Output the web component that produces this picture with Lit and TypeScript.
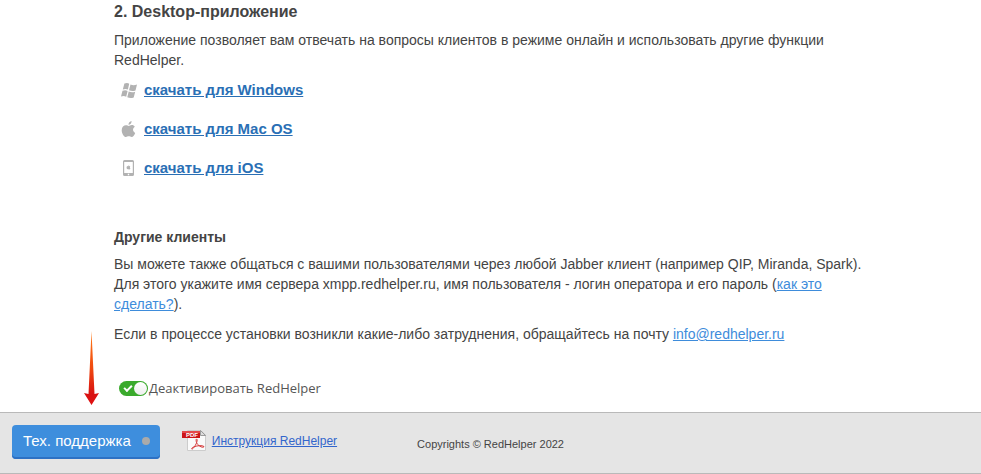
import { LitElement, html, css, svg } from "lit";
import { customElement, state } from "lit/decorators.js";

const windowsIcon = svg`
  <path d="M3.400 1.600C5.300.6 7 .8 8.200 1.700L6.900 7.600C5.300 6.700 3.600 6.700 1.800 7.500Z" />
  <path d="M9.500 2.400C11.400 3.400 13.600 3.400 16 2.500L14.500 8.500C12.300 9.300 10 9.200 8 8.200Z" />
  <path d="M1.500 8.700C3.400 7.900 5.200 8 6.600 8.900L5.200 14.700C3.700 13.800 2 13.700 0 14.500Z" />
  <path d="M7.700 9.500C9.700 10.400 11.800 10.500 14.200 9.700L12.700 15.400C10.400 16.200 8.300 16.100 6.300 15.200Z" />`;

const appleIcon = svg`
  <path d="M10.600 0C10.700 2.100 9.200 3.700 7.500 3.800 7.300 2 8.900.2 10.600 0Z" />
  <path d="M7.700 4.900C8.500 4.900 9.300 4.100 10.800 4.100 12.100 4.100 13.200 4.800 13.800 5.800 11.300 7.300 11.600 10.700 14.200 11.900 13.500 13.800 12.100 16 10.700 16 9.500 16 9.100 15.300 7.800 15.300 6.500 15.300 6 16 4.900 16 3 16 .7 12.500.7 9.200.7 6 2.800 4.200 4.900 4.200 6.200 4.200 7 4.900 7.700 4.900Z" />`;

const phoneIcon = svg`
  <path fill-rule="evenodd" d="M3.500 0H11.500Q13 0 13 1.500V14.500Q13 16 11.500 16H3.500Q2 16 2 14.500V1.500Q2 0 3.500 0ZM3.200 2V13H11.800V2ZM6.800 13.800V15.200H8.200V13.800Z" />
  <path d="M8.300 4.700 8.100 5.600 7.400 6 7.500 5.200ZM7.500 6.200C8.300 5.800 9 6 9.300 6.500 8.700 7.100 8.800 7.900 9.400 8.200 9 9.400 8.400 9.600 7.500 9.200 6.600 9.600 6 9.200 5.600 8.200 5.400 6.700 6.300 5.700 7.500 6.200Z" />`;

const downloads = [
  { icon: windowsIcon, label: "скачать для Windows" },
  { icon: appleIcon, label: "скачать для Mac OS" },
  { icon: phoneIcon, label: "скачать для iOS" },
];

@customElement("app-root")
export class AppRoot extends LitElement {
  static styles = css`
    :host {
      display: flex;
      flex-direction: column;
      min-height: 100vh;
      background: #fff;
      color: #444;
      font: 14px/20px "Liberation Sans", Arial, sans-serif;
    }
    main {
      max-width: 750px;
      padding: 2px 16px 14px 114px;
    }
    h2,
    h3,
    p,
    ul {
      margin: 0;
    }
    h2 {
      font-size: 16px;
      margin-bottom: 8px;
    }
    h3 {
      font-size: 14px;
      margin: 49px 0 7px;
    }
    p + p {
      margin-top: 10px;
    }
    a {
      color: #3e8cdb;
    }
    .downloads {
      list-style: none;
      padding: 0 0 0 7px;
      margin-top: 10px;
      display: grid;
      gap: 19px;
    }
    .downloads li {
      display: flex;
      align-items: center;
      gap: 7px;
    }
    .downloads svg {
      width: 16px;
      height: 16px;
      fill: #b2b2b2;
    }
    .downloads a {
      color: #2a6fb5;
      font-size: 15px;
      font-weight: bold;
    }
    .toggle {
      display: flex;
      width: fit-content;
      align-items: center;
      gap: 1px;
      margin: 34px 0 0 5px;
      font-family: "Open Sans", sans-serif;
      font-size: 13px;
      color: #555;
    }
    .toggle input {
      appearance: none;
      position: relative;
      width: 29px;
      height: 15px;
      margin: 0;
      border-radius: 8px;
      background: #aaa;
    }
    .toggle input:checked {
      background: #3aaa2c;
    }
    .toggle input::before {
      content: "";
      position: absolute;
      left: 5px;
      top: 4px;
      width: 6px;
      height: 3px;
      border: solid #fff;
      border-width: 0 0 2px 2px;
      rotate: -45deg;
    }
    .toggle input::after {
      content: "";
      position: absolute;
      right: 1px;
      top: 1px;
      width: 13px;
      height: 13px;
      border-radius: 50%;
      background: linear-gradient(#fff, #eee);
    }
    .toggle input:not(:checked)::after {
      right: 15px;
    }
    .toggle input:not(:checked)::before {
      display: none;
    }
    footer {
      position: relative;
      display: flex;
      align-items: center;
      padding: 12px 12px 14px;
      background: #e5e5e5;
      border: solid #b9b9b9;
      border-width: 1px 0;
    }
    .pointer {
      position: absolute;
      left: 83px;
      bottom: 100%;
      margin-bottom: 8px;
      width: 17px;
      height: 74px;
    }
    button {
      display: flex;
      align-items: center;
      gap: 11px;
      height: 34px;
      padding: 0 10px 2px 11px;
      border: 0;
      border-radius: 4px;
      background: #3e8edd;
      box-shadow: inset 0 -2px #2d71c4;
      color: #fff;
      font: 15px/20px "Liberation Sans", Arial, sans-serif;
      white-space: nowrap;
    }
    .dot {
      width: 8px;
      height: 8px;
      border-radius: 50%;
      background: #aaa;
    }
    .manual {
      display: flex;
      align-items: center;
      gap: 5px;
      margin: 0 80px 2px 22px;
      color: #3366cc;
      font-size: 12px;
    }
    .manual svg {
      width: 25px;
      height: 22px;
    }
    .copy {
      font-size: 11px;
      padding-top: 3px;
    }
  `;

  @state() private active = true;

  private toggle(e: Event) {
    this.active = (e.target as HTMLInputElement).checked;
  }

  render() {
    return html`
      <main>
        <h2>2. Desktop-приложение</h2>
        <p>
          Приложение позволяет вам отвечать на вопросы клиентов в режиме онлайн
          и использовать другие функции RedHelper.
        </p>
        <ul class="downloads">
          ${downloads.map(
            (d) => html`<li>
              <svg viewBox="0 0 16 16" aria-hidden="true">${d.icon}</svg>
              <a href="#">${d.label}</a>
            </li>`
          )}
        </ul>
        <h3>Другие клиенты</h3>
        <p>
          Вы можете также общаться с вашими пользователями через любой Jabber
          клиент (например QIP, Miranda, Spark). Для этого укажите имя сервера
          xmpp.redhelper.ru, имя пользователя - логин оператора и его пароль
          (<a href="#">как это сделать?</a>).
        </p>
        <p>
          Если в процессе установки возникли какие-либо затруднения, обращайтесь
          на почту <a href="mailto:info@redhelper.ru">info@redhelper.ru</a>
        </p>
        <label class="toggle">
          <input type="checkbox" .checked=${this.active} @change=${this.toggle} />
          <span>Деактивировать RedHelper</span>
        </label>
      </main>
      <footer>
        <svg class="pointer" viewBox="0 0 17 74" aria-hidden="true">
          <defs>
            <linearGradient id="heat" x1="0" y1="0" x2="0" y2="1">
              <stop offset="0" stop-color="#ff7a18" />
              <stop offset=".5" stop-color="#f04a10" />
              <stop offset=".85" stop-color="#d81212" />
              <stop offset="1" stop-color="#e01010" />
            </linearGradient>
          </defs>
          <path fill="url(#heat)" d="M8.500 0L11.500 63 16 62 8.500 74 1 62 5.500 63Z" />
        </svg>
        <button type="button">Тех. поддержка<span class="dot"></span></button>
        <a class="manual" href="#">
          <svg viewBox="0 0 25 22" aria-hidden="true">
            <path d="M5.500.5H19L23.500 5V20.500H5.500Z" fill="#fafafa" stroke="#ccc" />
            <path d="M18.500.5V5.500H23.500Z" fill="#ddd" stroke="#888" stroke-width=".8" />
            <rect y="1" width="18" height="7" fill="#cc1418" />
            <rect y="1" width="18" height="2" fill="#e5484a" />
            <text x="4" y="7" font-size="6" font-weight="bold" fill="#fff" font-family="Liberation Sans, sans-serif">PDF</text>
            <path d="M14.500 9C16 9 15 14 11 18.500 9.500 20 9 18.500 11 17.200 15 15.500 20 15 22 16.500 22 18.500 16 16.500 14.500 12.500 14 11 14 9 14.500 9Z" fill="none" stroke="#d63a3a" stroke-width="1" />
          </svg>
          <span>Инструкция RedHelper</span>
        </a>
        <span class="copy">Copyrights © RedHelper 2022</span>
      </footer>
    `;
  }
}
